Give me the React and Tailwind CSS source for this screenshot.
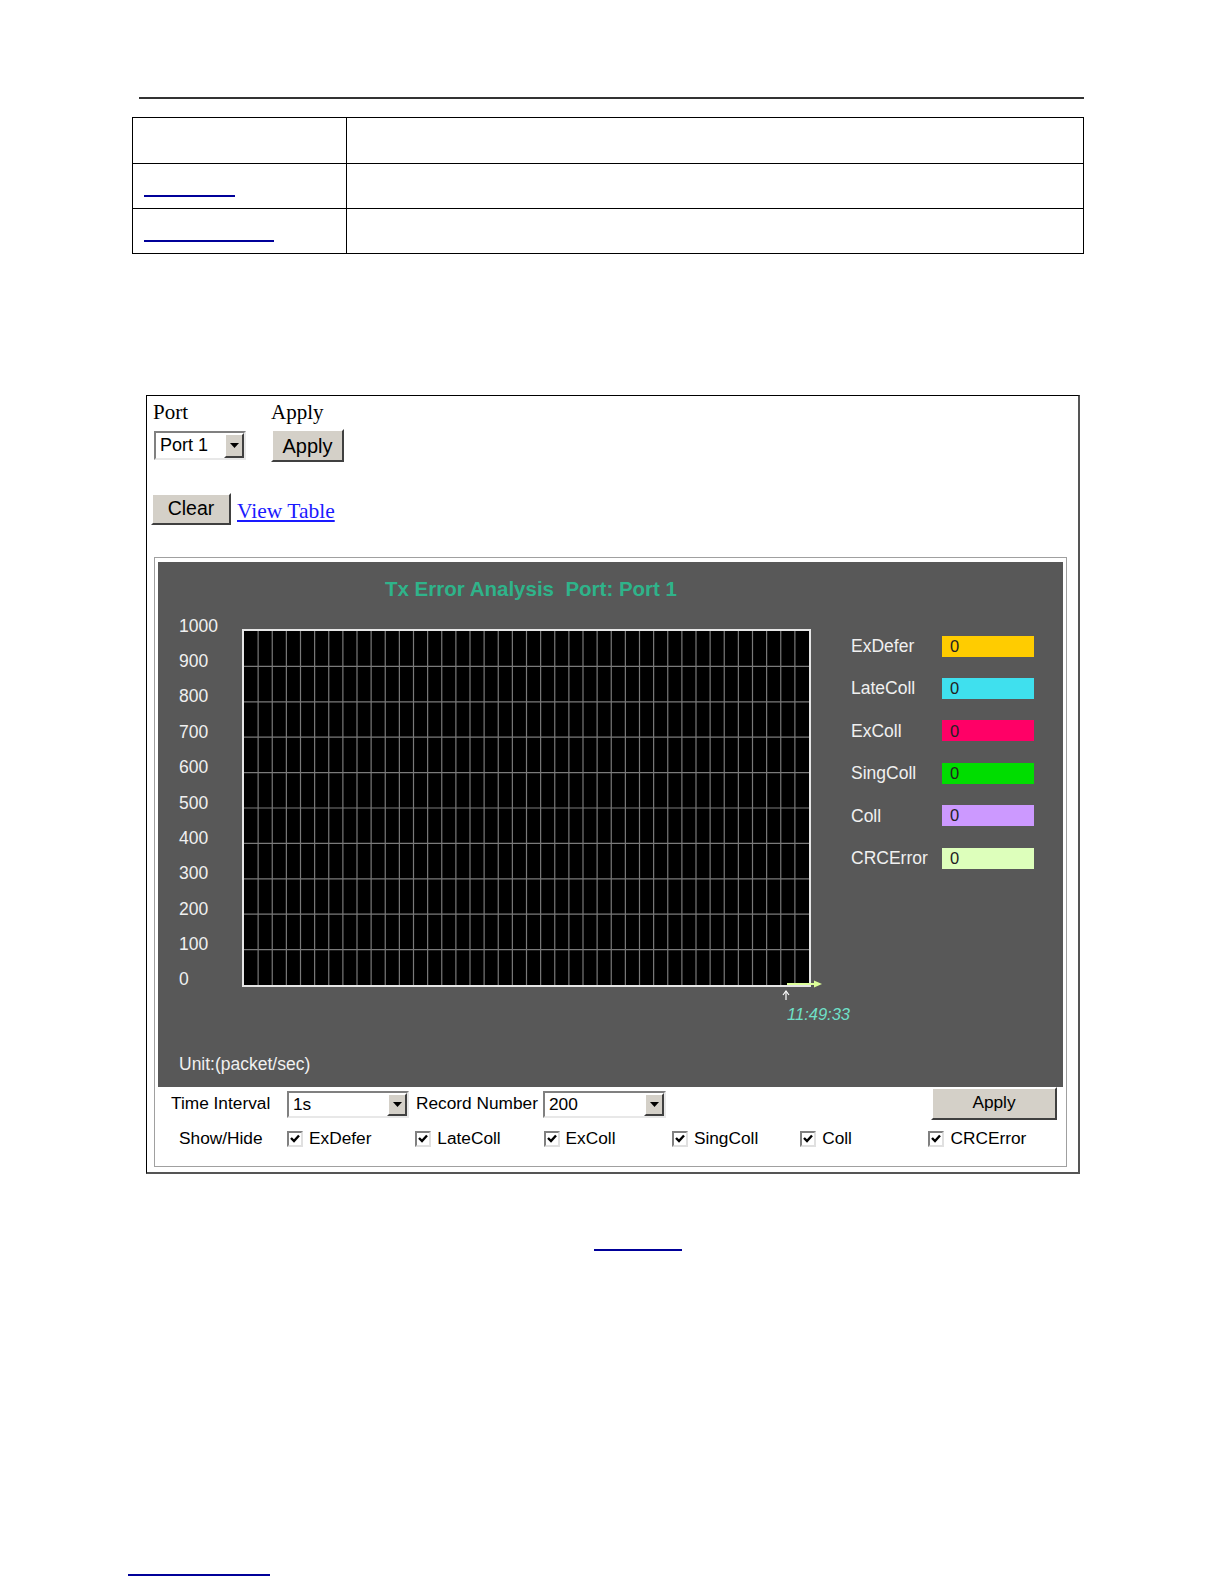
import React from 'react';

const legend = [
  { name: 'ExDefer', color: 'bg-[#ffcc00]' },
  { name: 'LateColl', color: 'bg-[#3fe0ee]' },
  { name: 'ExColl', color: 'bg-[#ff0066]' },
  { name: 'SingColl', color: 'bg-[#00dd00]' },
  { name: 'Coll', color: 'bg-[#cc99ff]' },
  { name: 'CRCError', color: 'bg-[#ddffbb]' },
];

const yLabels = ['1000', '900', '800', '700', '600', '500', '400', '300', '200', '100', '0'];

// classic raised grey button
function WinButton({ children, className = '' }) {
  return (
    <div
      className={`flex items-center justify-center bg-[#d4d0c8] border-2 border-t-white border-l-white border-r-[#404040] border-b-[#404040] text-black ${className}`}
    >
      {children}
    </div>
  );
}

function WinSelect({ value, className = '', textSize = 'text-[17px]' }) {
  return (
    <div
      className={`flex items-stretch bg-white border-2 border-t-[#808080] border-l-[#808080] border-r-[#e8e8e8] border-b-[#e8e8e8] ${className}`}
    >
      <div className={`flex-1 flex items-center pl-[4px] text-black ${textSize}`}>{value}</div>
      <div className="w-[20px] bg-[#d4d0c8] border-2 border-t-white border-l-white border-r-[#404040] border-b-[#404040] flex items-center justify-center">
        <svg width="9" height="5" viewBox="0 0 9 5">
          <path d="M0 0 H9 L4.5 5 Z" fill="#000" />
        </svg>
      </div>
    </div>
  );
}

function CheckBox() {
  return (
    <div className="w-[16px] h-[16px] bg-white border-2 border-t-[#808080] border-l-[#808080] border-r-[#e0e0e0] border-b-[#e0e0e0] flex items-center justify-center">
      <svg width="10" height="9" viewBox="0 0 10 9">
        <path d="M1 4 L4 7 L9 1.5" stroke="#000" strokeWidth="2.4" fill="none" />
      </svg>
    </div>
  );
}

function Plot() {
  const w = 569;
  const h = 358;
  const cols = 40;
  const verticals = [];
  for (let i = 1; i < cols; i++) {
    const x = 2 + (i * (w - 4)) / cols;
    verticals.push(<line key={'v' + i} x1={x} y1={2} x2={x} y2={h - 2} stroke="#7a7a7a" strokeWidth="1.2" />);
  }
  const horizontals = [];
  for (let j = 1; j < 10; j++) {
    const y = 2 + (j * (h - 4)) / 10;
    horizontals.push(<line key={'h' + j} x1={2} y1={y} x2={w - 2} y2={y} stroke="#7a7a7a" strokeWidth="1.2" />);
  }
  return (
    <div className="relative w-[569px] h-[358px]">
      <svg width={w} height={h} viewBox={`0 0 ${w} ${h}`} className="overflow-visible block">
        <rect x="0" y="0" width={w} height={h} fill="#000" />
        {verticals}
        {horizontals}
        <rect x="1" y="1" width={w - 2} height={h - 2} fill="none" stroke="#e6e6e6" strokeWidth="2" />
        {/* current sample marker */}
        <line x1="545" y1="355" x2="574" y2="355" stroke="#ddff99" strokeWidth="2" />
        <path d="M572 351.5 L580 355 L572 358.5 Z" fill="#ddff99" />
        <line x1="544" y1="363" x2="544" y2="371" stroke="#fff" strokeWidth="1.2" />
        <path d="M541 366 L544 362 L547 366" stroke="#fff" strokeWidth="1.2" fill="none" />
      </svg>
      <span className="absolute left-[545px] top-[375px] text-[16.5px] italic text-[#6fe0c8] leading-[20px] whitespace-nowrap">
        11:49:33
      </span>
    </div>
  );
}

function Applet() {
  return (
    <div className="ml-[7px] mt-[32px] w-[913px] border border-[#a0a0a0] bg-white px-[3px] pt-[4px] pb-[8px] font-['Liberation_Sans',Arial,sans-serif]">
      {/* dark chart area */}
      <div className="bg-[#585858] h-[525px] flex flex-col pb-[13px]">
        <div className="pt-[15px] pl-[227px] text-[20.5px] leading-[24px] font-bold text-[#2fb38a] whitespace-pre">
          Tx Error Analysis  Port: Port 1
        </div>
        <div className="mt-[7px] flex h-[420px]">
          <div className="ml-[21px] w-[63px] flex flex-col">
            {yLabels.map((l) => (
              <div key={l} className="h-[35.4px] flex items-center text-[17.5px] text-[#f0f0f0]">
                {l}
              </div>
            ))}
          </div>
          <div className="mt-[21px]">
            <Plot />
          </div>
          <div className="ml-[40px] mt-[17px] flex flex-col">
            {legend.map((it) => (
              <div key={it.name} className="h-[42.4px] flex items-center">
                <span className="w-[91px] text-[17.5px] text-[#f0f0f0]">{it.name}</span>
                <div className={`w-[92px] h-[21px] ${it.color} flex items-center pl-[8px] text-[16.5px] text-[#222]`}>0</div>
              </div>
            ))}
          </div>
        </div>
        <div className="mt-auto ml-[21px] text-[17.5px] leading-[20px] text-[#f0f0f0]">Unit:(packet/sec)</div>
      </div>
      {/* controls */}
      <div className="flex items-start h-[32.5px] text-[17.3px]">
        <div className="pl-[13px] w-[129px] pt-[5px] leading-[22px] text-black">Time Interval</div>
        <WinSelect value="1s" className="w-[122px] h-[27px] mt-[4px]" textSize="text-[17.3px]" />
        <div className="ml-[7px] w-[127px] pt-[5px] leading-[22px] text-black whitespace-nowrap">Record Number</div>
        <WinSelect value="200" className="w-[123px] h-[27px] mt-[4px]" textSize="text-[17.3px]" />
        <WinButton className="ml-auto mr-[6px] w-[126px] h-[32.5px]">Apply</WinButton>
      </div>
      <div className="flex items-center h-[38px] text-[17.3px] text-black">
        <div className="pl-[21px] w-[129px]">Show/Hide</div>
        {legend.map((it) => (
          <div key={it.name} className="flex items-center gap-[6px] w-[128.3px]">
            <CheckBox />
            <span>{it.name}</span>
          </div>
        ))}
      </div>
    </div>
  );
}

export default function App() {
  return (
    <div className="bg-white h-[1584px] overflow-hidden pt-[97px] font-['Liberation_Sans',Arial,sans-serif]">
      <div className="ml-[139px] w-[945px] h-[2px] bg-[#333]" />

      {/* description table */}
      <div className="ml-[132px] mt-[18px] w-[952px] border-[1.5px] border-black">
        <div className="flex h-[45.5px] border-b-[1.5px] border-black">
          <div className="w-[214px] border-r-[1.5px] border-black" />
          <div className="flex-1" />
        </div>
        <div className="flex h-[45.5px] border-b-[1.5px] border-black">
          <div className="w-[214px] border-r-[1.5px] border-black pl-[11px] pt-[31px]">
            <div className="w-[91px] h-[2px] bg-[#000099]" />
          </div>
          <div className="flex-1" />
        </div>
        <div className="flex h-[44px]">
          <div className="w-[214px] border-r-[1.5px] border-black pl-[11px] pt-[31px]">
            <div className="w-[130px] h-[2px] bg-[#000099]" />
          </div>
          <div className="flex-1" />
        </div>
      </div>

      {/* screenshot panel */}
      <div className="ml-[146px] mt-[141px] w-[934px] h-[779px] border border-black border-r-2 border-b-2 border-r-[#555] border-b-[#555] bg-white">
        <div className="pl-[6px] pt-[5px] flex font-['Liberation_Serif','Times_New_Roman',serif] text-[21px] leading-[22px] text-black">
          <div className="w-[118px]">Port</div>
          <div>Apply</div>
        </div>
        <div className="pl-[7px] mt-[6px] flex items-start">
          <WinSelect value="Port 1" className="w-[92px] h-[29px] mt-[2px]" textSize="text-[18px]" />
          <WinButton className="ml-[25px] w-[73px] h-[33px] text-[20px]">Apply</WinButton>
        </div>
        <div className="pl-[4px] mt-[31px] flex items-end">
          <WinButton className="w-[80px] h-[32px] text-[19.5px]">Clear</WinButton>
          <span className="ml-[6px] mb-[-2px] font-['Liberation_Serif','Times_New_Roman',serif] text-[21.5px] text-[#1a1aff] underline">
            View Table
          </span>
        </div>
        <Applet />
      </div>

      <div className="ml-[594px] mt-[75px] w-[88px] h-[2px] bg-[#000099]" />
      <div className="ml-[128px] mt-[323px] w-[142px] h-[2px] bg-[#000099]" />
    </div>
  );
}
